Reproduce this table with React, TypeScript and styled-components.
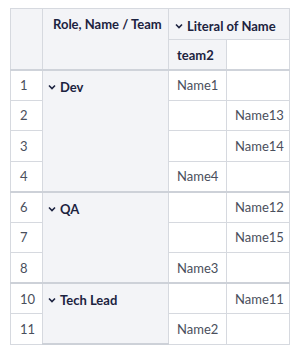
import styled, { createGlobalStyle } from "styled-components";

const GlobalStyle = createGlobalStyle`
  body {
    margin: 0;
    background: #ffffff;
    font-family: Lato, "Open Sans", sans-serif;
  }
`;

const Page = styled.div`
  padding: 8px 9px 8px 10px;
`;

const Table = styled.table`
  border-collapse: collapse;
  table-layout: fixed;
  width: 279px;
  font-size: 13px;
  color: #4a4f5c;
  border: 1px solid #d6d9df;
`;

const Col = styled.col<{ $w: number }>`
  width: ${(p) => p.$w}px;
`;

const HeadRow = styled.tr<{ $h: number }>`
  height: ${(p) => p.$h}px;
`;

const Th = styled.th<{ $pl?: number; $thin?: boolean }>`
  background: #f3f4f7;
  color: #1c2340;
  font-weight: 700;
  text-align: left;
  vertical-align: top;
  padding: 7px 6px 0 ${(p) => p.$pl ?? 8}px;
  border: 1px solid #d6d9df;
  border-bottom: ${(p) => (p.$thin ? "1px solid #d6d9df" : "2px solid #cfd3da")};
  box-sizing: border-box;
  white-space: nowrap;
`;

const Blank = styled.th`
  background: #ffffff;
  border: 1px solid #d6d9df;
  border-bottom: 2px solid #cfd3da;
`;

const Tr = styled.tr<{ $groupEnd?: boolean }>`
  height: 30.5px;
  & > td {
    border-bottom: ${(p) => (p.$groupEnd ? "2px solid #cdd1d8" : "1px solid #d6d9df")};
  }
`;

const Num = styled.td`
  padding: 0 9px;
  border: 1px solid #d6d9df;
  background: #ffffff;
  color: #4a4f5c;
`;

const Group = styled.td`
  background: #f3f4f7;
  color: #1c2340;
  font-weight: 700;
  vertical-align: top;
  padding: 6px 5px 0 5px;
  border: 1px solid #d6d9df;
  border-bottom: 2px solid #cdd1d8 !important;
  white-space: nowrap;
`;

const Cell = styled.td`
  padding: 0 8px;
  border: 1px solid #d6d9df;
  background: #ffffff;
  white-space: nowrap;
`;

const Toggle = styled.span`
  display: inline-flex;
  align-items: center;
  gap: 4px;
`;

function Chevron() {
  return (
    <svg width="8" height="6" viewBox="0 0 8 6">
      <path d="M1 1.5 L4 4.5 L7 1.5" fill="none" stroke="#1c2340" strokeWidth="1.6" />
    </svg>
  );
}

type Row = { n: number; a?: string; b?: string };
type GroupData = { name: string; rows: Row[] };

const groups: GroupData[] = [
  {
    name: "Dev",
    rows: [
      { n: 1, a: "Name1" },
      { n: 2, b: "Name13" },
      { n: 3, b: "Name14" },
      { n: 4, a: "Name4" },
    ],
  },
  {
    name: "QA",
    rows: [
      { n: 6, b: "Name12" },
      { n: 7, b: "Name15" },
      { n: 8, a: "Name3" },
    ],
  },
  {
    name: "Tech Lead",
    rows: [
      { n: 10, b: "Name11" },
      { n: 11, a: "Name2" },
    ],
  },
];

export default function App() {
  return (
    <Page>
      <GlobalStyle />
      <Table>
        <colgroup>
          <Col $w={32} />
          <Col $w={126} />
          <Col $w={58} />
          <Col $w={63} />
        </colgroup>
        <thead>
          <HeadRow $h={31}>
            <Th rowSpan={2} />
            <Th rowSpan={2} $pl={10}>Role, Name / Team</Th>
            <Th colSpan={2} $thin $pl={6}>
              <Toggle>
                <Chevron />
                Literal of Name
              </Toggle>
            </Th>
          </HeadRow>
          <HeadRow $h={30}>
            <Th>team2</Th>
            <Blank />
          </HeadRow>
        </thead>
        <tbody>
          {groups.map((g, gi) =>
            g.rows.map((r, ri) => (
              <Tr key={r.n} $groupEnd={ri === g.rows.length - 1 && gi < groups.length - 1}>
                <Num>{r.n}</Num>
                {ri === 0 && (
                  <Group rowSpan={g.rows.length}>
                    <Toggle>
                      <Chevron />
                      {g.name}
                    </Toggle>
                  </Group>
                )}
                <Cell>{r.a}</Cell>
                <Cell>{r.b}</Cell>
              </Tr>
            ))
          )}
        </tbody>
      </Table>
    </Page>
  );
}
